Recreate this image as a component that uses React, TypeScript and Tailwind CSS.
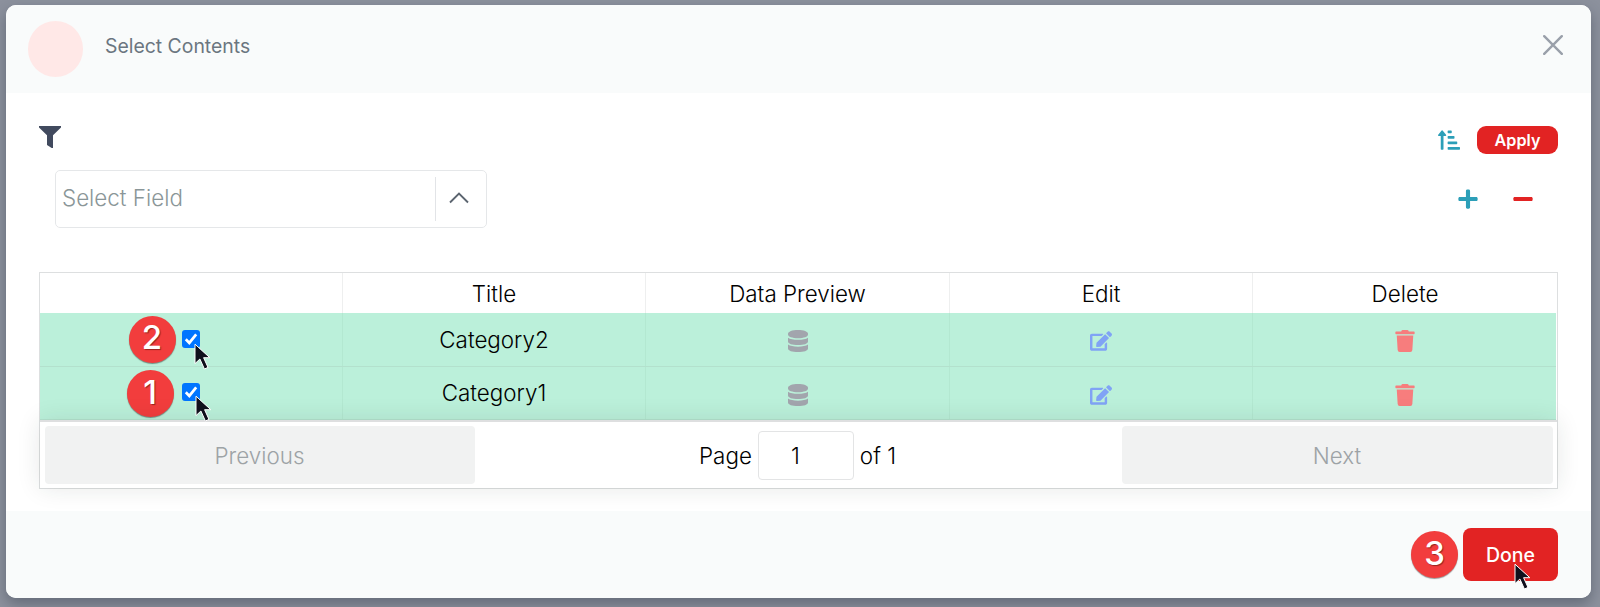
import React from "react";
import { FaEdit, FaTrash, FaSortAmountUpAlt, FaPlus, FaMinus } from "react-icons/fa";

function Cursor({ className }: { className: string }) {
  return (
    <svg viewBox="0 0 17 28" className={"absolute h-[28px] w-[17px] " + className}>
      <path
        d="M1 1.2V20.6l4.9-4.6 4.5 10 3.6-1.6L9.6 14.700h6.200z"
        fill="#10101c"
        stroke="#fff"
        strokeWidth="1"
      />
    </svg>
  );
}

function Funnel() {
  return (
    <svg viewBox="0 0 22 22" className="h-[22px] w-[22px]">
      <path d="M0 0h22v1.500L14 9.300V22h-1.300L8 19V9.300L0 1.500z" fill="#414a5e" />
    </svg>
  );
}

function Database() {
  return (
    <svg viewBox="0 0 20 22" className="h-[22px] w-[20px]">
      <g fill="#a2a5ad">
        <path d="M0 3.800C0 1.600 4.200 0 10 0s10 1.600 10 3.800v.8c0 2.200-4.200 3.700-10 3.700S0 6.800 0 4.600z" />
        <path d="M0 7.700c2 1.500 5.600 2.100 10 2.100s8-.6 10-2.100v3.700c0 2.200-4.200 3.600-10 3.600S0 13.600 0 11.400z" />
        <path d="M0 14.600c2 1.500 5.600 2.100 10 2.100s8-.6 10-2.100v3.800c0 2.200-4.200 3.600-10 3.600S0 20.600 0 18.400z" />
      </g>
    </svg>
  );
}

function Badge({ n, className }: { n: number; className: string }) {
  return (
    <div
      className={
        "absolute flex h-[47px] w-[47px] items-center justify-center rounded-full bg-[#f23d3d] pb-[3px] text-[33px] leading-none font-medium text-white shadow-[0_1px_1px_rgba(0,0,0,0.4)] [text-shadow:1px_1px_1px_rgba(90,20,10,0.6)] " +
        className
      }
    >
      {n}
    </div>
  );
}

function Check() {
  return (
    <span className="mb-[1px] flex h-[18px] w-[18px] items-center justify-center rounded-[3px] bg-[#0075ff]">
      <svg viewBox="0 0 18 18" className="h-[18px] w-[18px]">
        <path d="M3.800 9.300l3.500 3.600 6.900-8.600" fill="none" stroke="#fff" strokeWidth="2.700" />
      </svg>
    </span>
  );
}

const grid = "grid grid-cols-[303px_303px_304px_303px_1fr]";
const cell = "flex items-center justify-center border-r last:border-r-0";

export default function App() {
  const rows = [
    { title: "Category2", badge: 2, badgeAt: "left-[88.5px] top-[2.5px]", cursorAt: "left-[154px] top-[30px]" },
    { title: "Category1", badge: 1, badgeAt: "left-[86.5px] top-[3.5px]", cursorAt: "left-[155px] top-[28px]" },
  ];
  return (
    <div className="h-[607px] w-[1600px] overflow-hidden bg-[#8c919d] pt-[5px] pl-[6px] font-['Inter',sans-serif] font-light">
      <div className="flex h-[593px] w-[1585px] flex-col overflow-hidden rounded-[10px] bg-white shadow-[0_6px_14px_rgba(40,50,65,0.4)]">
        <header className="flex h-[88px] shrink-0 items-start bg-[#f9fbfb] pt-[16px] pr-[28px] pl-[22px]">
          <div className="h-[56px] w-[55px] rounded-full bg-[#ffe8e7]" />
          <h1 className="mt-[11px] ml-[22px] text-[19.4px] leading-[28px] font-normal text-[#6b7680]">Select Contents</h1>
          <svg viewBox="0 0 20 20" className="mt-[14px] ml-auto h-[20px] w-[20px]">
            <path d="M1.200 1.200l17.600 17.600M18.800 1.200L1.200 18.800" stroke="#9aa0aa" strokeWidth="2.400" strokeLinecap="round" />
          </svg>
        </header>

        <main className="flex flex-1 flex-col px-[33px]">
          <div className="flex h-[66px] pt-[33px]">
            <Funnel />
            <FaSortAmountUpAlt className="mt-[3px] ml-auto h-[22px] w-[22px] text-[#2c9fb8]" />
            <button className="ml-[17px] flex h-[28px] w-[81px] items-center justify-center rounded-[9px] bg-[#e22323] text-[16.2px] font-semibold text-white">
              Apply
            </button>
          </div>
          <div className="mt-[11px] flex h-[58px] items-center pr-[24px] pl-[16px]">
            <div className="flex h-[58px] w-[432px] items-center rounded-[5px] border border-[#e5e7e9]">
              <span className="flex-1 pb-[2px] pl-[6px] text-[22.4px] text-[#8a9698]">Select Field</span>
              <span className="h-[44px] w-px bg-[#e2e4e7]" />
              <span className="flex w-[50px] justify-center pr-[4px] pb-[2px]">
                <svg viewBox="0 0 20 12" className="h-[12px] w-[20px]">
                  <path d="M1 10.500L10 1.500l9 9" fill="none" stroke="#5c6570" strokeWidth="1.900" />
                </svg>
              </span>
            </div>
            <FaPlus className="ml-auto h-[22px] w-[22px] text-[#2c9fb8]" />
            <FaMinus className="ml-[33px] h-[22px] w-[22px] text-[#e22323]" />
          </div>

          <section className="mt-[44px] flex h-[217px] w-[1519px] flex-col border border-[#dddfe0] text-[22.4px] text-black">
            <div className={grid + " h-[40px] shrink-0"}>
              {["", "Title", "Data Preview", "Edit", "Delete"].map((h, i) => (
                <div key={i} className={cell + " border-[#eeefef] pt-[2px]"}>
                  {h}
                </div>
              ))}
            </div>
            {rows.map((r) => (
              <div
                key={r.title}
                className={grid + " mr-px h-[53.5px] shrink-0 border-b border-[#b3e1cd] bg-[#bbf0da]"}
              >
                <div className={cell + " relative border-[#b3e8d1]"}>
                  <Check />
                  <Badge n={r.badge} className={r.badgeAt} />
                  <Cursor className={"z-20 " + r.cursorAt} />
                </div>
                <div className={cell + " border-[#b3e8d1] pt-[1px]"}>{r.title}</div>
                <div className={cell + " border-[#b3e8d1] pt-[4px]"}>
                  <Database />
                </div>
                <div className={cell + " border-[#b3e8d1] pt-[4px] pr-[1px]"}>
                  <FaEdit className="h-[22px] w-[22px] text-[#80a3f5]" />
                </div>
                <div className={cell + " border-[#b3e8d1] pt-[4px]"}>
                  <FaTrash className="h-[22px] w-[20px] text-[#f77d7d]" />
                </div>
              </div>
            ))}
            <div className="relative flex flex-1 items-center justify-between border-t-2 border-[#dedfe0] bg-white px-[4.5px] shadow-[0_0_24px_rgba(30,50,40,0.11)]">
              <button className="h-[58px] w-[430px] rounded-[4px] bg-[#f1f2f2] pt-[1px] text-[#9da3a6]">Previous</button>
              <div className="flex items-center pr-[1px]">
                <span className="pt-[1px]">Page</span>
                <span className="mx-[6px] flex h-[49px] w-[96px] items-center justify-center rounded-[4px] border border-[#e3e4e5] pt-[1px] pr-[21px]">
                  1
                </span>
                <span className="pt-[1px]">of 1</span>
              </div>
              <button className="h-[58px] w-[431px] rounded-[4px] bg-[#f1f2f2] pt-[1px] text-[#9da3a6]">Next</button>
            </div>
          </section>
        </main>

        <footer className="flex h-[87px] shrink-0 items-start justify-end bg-[#f9fbfb] pt-[17px] pr-[33px]">
          <div className="relative">
            <Badge n={3} className="-left-[52px] top-[3px]" />
            <button className="block h-[53px] w-[95px] rounded-[8px] bg-[#e22323] pt-[2px] text-[19.5px] font-medium text-white">
              Done
            </button>
            <Cursor className="top-[35px] left-[51px]" />
          </div>
        </footer>
      </div>
    </div>
  );
}
